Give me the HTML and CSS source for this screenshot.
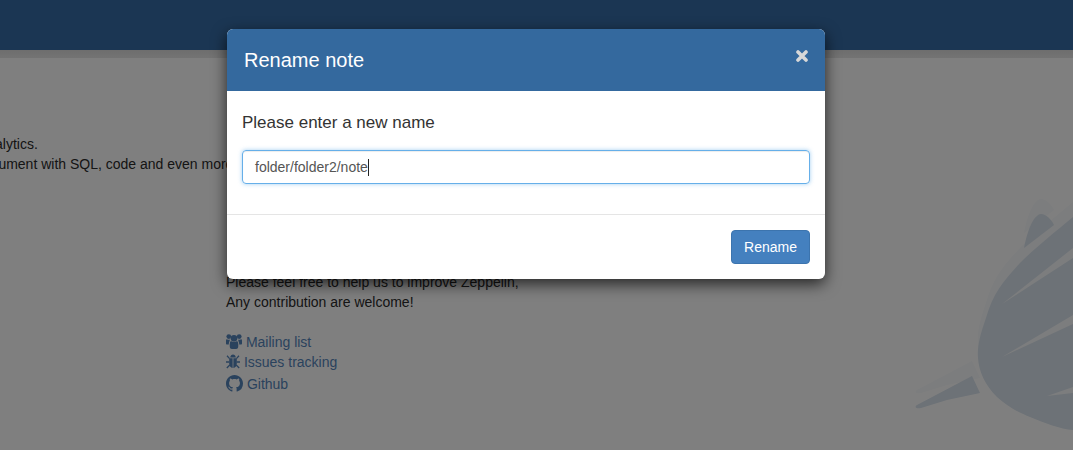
FILE: index.html
```html
<!DOCTYPE html>
<html lang="en">
<head>
    <meta charset="UTF-8">
    <title>Zeppelin - Rename note</title>
    <link rel="stylesheet" href="styles.css">
</head>
<body>
    <header class="navbar"></header>
    <div class="navbar-edge"></div>

    <svg class="watermark" width="1073" height="450" viewBox="0 0 1073 450" aria-hidden="true">
        <defs>
            <g id="bird">
                <path d="M1024 248C1027 232 1033 215 1041 214C1046 214 1051 219 1054 225Z"/>
                <path fill-rule="evenodd" d="M1073 217C1050 236 1033 250 1020 263C1004 280 993 293 986 318C980 335 977 347 978 358C979 372 985 385 997 397C1007 406 1017 412 1030 417C1045 423 1060 429 1073 430ZM1002 304L1073 248V258ZM1002 357L1073 315V324ZM1047 396L1073 387V393Z"/>
                <path d="M972 376L980 393L947 400L921 408C916 409 914 407 917 405Z"/>
            </g>
        </defs>
        <use href="#bird" class="bird-halo" y="-15"/>
        <use href="#bird" class="bird-main"/>
    </svg>

    <main class="home">
        <section class="intro">
            <p>Zeppelin is web-based notebook that enables interactive data analytics.</p>
            <p>You can make beautiful data-driven, interactive, collaborative document with SQL, code and even more!</p>
        </section>

        <section class="help">
            <p>Please feel free to help us to improve Zeppelin,</p>
            <p>Any contribution are welcome!</p>
            <ul class="links">
                <li>
                    <a href="#">
                        <svg class="icon-users" width="16" height="15" viewBox="0 0 16 15" fill="currentColor">
                            <circle cx="8" cy="4.2" r="3.3"/>
                            <circle cx="2.8" cy="2.6" r="2.4"/>
                            <circle cx="13.2" cy="2.6" r="2.4"/>
                            <path d="M4 8.5C4.1 7.6 5 7 5.8 7.4C7.2 8 8.8 8 10.2 7.4C11 7 11.9 7.6 12 8.5C12.4 10 12.4 11.5 12.2 13C12.1 14.2 11.2 15 10.2 15H5.8C4.8 15 3.9 14.2 3.8 13C3.6 11.5 3.6 10 4 8.5Z"/>
                            <path d="M0 6.6C0 5.6 .7 5.1 1.3 5.4C2 5.8 3 5.9 3.9 5.6C3.9 6.2 3.7 6.7 3.4 7.4C2.9 8.4 2.8 9.4 2.8 10.6H1C.4 10.6 0 10.1 0 9.4Z"/>
                            <path d="M16 6.6C16 5.6 15.3 5.1 14.7 5.4C14 5.8 13 5.9 12.1 5.6C12.1 6.2 12.3 6.7 12.6 7.4C13.1 8.4 13.2 9.4 13.2 10.6H15C15.6 10.6 16 10.1 16 9.4Z"/>
                        </svg>
                        Mailing list
                    </a>
                </li>
                <li>
                    <a href="#">
                        <svg class="icon-bug" width="14" height="15" viewBox="0 0 14 15" fill="currentColor">
                            <path d="M4.2 3.4C4.4 1.6 5.6 .5 7 .5C8.4 .5 9.6 1.6 9.8 3.4Z"/>
                            <path d="M3.4 4.2H6.6V14C4.6 13.8 3.2 12 3.2 9.5V5Z"/>
                            <path d="M7.4 4.2H10.6L10.8 5V9.5C10.8 12 9.4 13.8 7.4 14Z"/>
                            <path d="M1 1.8L3.6 4.6M13 1.8L10.4 4.6M0 8H3.4M14 8H10.6M.8 14L3.8 11M13.2 14L10.2 11" stroke="currentColor" stroke-width="1.3" fill="none"/>
                        </svg>
                        Issues tracking
                    </a>
                </li>
                <li class="links-github">
                    <a href="#">
                        <svg class="icon-github" width="17" height="17" viewBox="0 0 16 16" fill="currentColor">
                            <path d="M8 0C3.58 0 0 3.58 0 8c0 3.54 2.29 6.53 5.47 7.59.4.07.55-.17.55-.38 0-.19-.01-.82-.01-1.49-2.01.37-2.53-.49-2.69-.94-.09-.23-.48-.94-.82-1.13-.28-.15-.68-.52-.01-.53.63-.01 1.08.58 1.23.82.72 1.21 1.87.87 2.33.66.07-.52.28-.87.51-1.07-1.78-.2-3.64-.89-3.64-3.95 0-.87.31-1.59.82-2.15-.08-.2-.36-1.02.08-2.12 0 0 .67-.21 2.2.82.64-.18 1.32-.27 2-.27.68 0 1.36.09 2 .27 1.53-1.04 2.2-.82 2.2-.82.44 1.1.16 1.92.08 2.12.51.56.82 1.27.82 2.15 0 3.07-1.87 3.75-3.65 3.95.29.25.54.73.54 1.48 0 1.07-.01 1.93-.01 2.2 0 .21.15.46.55.38A8.013 8.013 0 0016 8c0-4.42-3.58-8-8-8z"/>
                        </svg>
                        Github
                    </a>
                </li>
            </ul>
        </section>
    </main>

    <div class="backdrop"></div>

    <div class="modal">
        <div class="modal-header">
            <h4>Rename note</h4>
            <button class="close" type="button" aria-label="Close">
                <svg width="12" height="12" viewBox="0 0 12 12">
                    <path d="M2 2L10 10M10 2L2 10" stroke="currentColor" stroke-width="3.6" stroke-linecap="round"/>
                </svg>
            </button>
        </div>
        <div class="modal-body">
            <h5>Please enter a new name</h5>
            <div class="name-input">folder/folder2/note<span class="caret"></span></div>
        </div>
        <div class="modal-footer">
            <button class="btn-rename" type="button">Rename</button>
        </div>
    </div>
</body>
</html>
```

FILE: styles.css
```css
* {
    margin: 0;
    padding: 0;
    box-sizing: border-box;
}

html,
body {
    height: 450px;
    overflow: hidden;
}

body {
    position: relative;
    background: #fff;
    color: #2a2a2a;
    font-family: 'Liberation Sans', Arial, sans-serif;
    font-size: 14px;
    line-height: 20px;
}

/* Top bar */
.navbar {
    height: 50px;
    background: #366ca6;
}

.navbar-edge {
    height: 8px;
    background: linear-gradient(#dcdcdc, #e8e8e8);
}

/* Home page behind the dialog */
.watermark {
    position: absolute;
    top: 0;
    left: 0;
}

.bird-main {
    fill: #dae4ee;
}

.bird-halo {
    fill: #f8fafc;
}

.home {
    position: relative;
    padding-top: 76px;
}

.intro {
    margin-left: -405px;
    white-space: nowrap;
}

.help {
    margin-top: 98px;
    margin-left: 226px;
}

.links {
    list-style: none;
    margin-top: 20px;
}

.links a {
    color: #5585bb;
    text-decoration: none;
}

.links svg {
    vertical-align: -2px;
}

.links-github {
    margin-top: 2px;
}

.links-github svg {
    vertical-align: -3px;
}

/* Dialog */
.backdrop {
    position: absolute;
    top: 0;
    left: 0;
    width: 100%;
    height: 100%;
    background: rgba(0, 0, 0, 0.5);
}

.modal {
    position: absolute;
    top: 29px;
    left: 227px;
    width: 598px;
    height: 250px;
    background: #fff;
    border-radius: 6px;
    box-shadow: 0 5px 15px rgba(0, 0, 0, 0.7);
    color: #333;
}

.modal-header {
    display: flex;
    justify-content: space-between;
    height: 62px;
    padding: 0 17px;
    border-radius: 6px 6px 0 0;
    background: #34699e;
    color: #fff;
}

.modal-header h4 {
    font-size: 20px;
    font-weight: 400;
    line-height: 62px;
}

.close {
    height: 12px;
    margin-top: 21px;
    border: 0;
    background: none;
    color: #d8d8d8;
}

.close svg {
    display: block;
}

.modal-body {
    padding: 21px 15px 30px;
    border-bottom: 1px solid #e5e5e5;
}

.modal-body h5 {
    font-size: 17px;
    font-weight: 400;
    line-height: 21px;
}

.name-input {
    height: 34px;
    margin-top: 17px;
    padding: 6px 12px;
    border: 1px solid #66afe9;
    border-radius: 4px;
    box-shadow: inset 0 1px 1px rgba(0, 0, 0, 0.075), 0 0 4px rgba(102, 175, 233, 0.6);
    color: #555;
}

.caret {
    display: inline-block;
    width: 1px;
    height: 17px;
    background: #222;
    vertical-align: -4px;
}

.modal-footer {
    display: flex;
    justify-content: flex-end;
    padding: 15px;
}

.btn-rename {
    width: 79px;
    height: 34px;
    border: 1px solid #3c74ae;
    border-radius: 4px;
    background: #4480bf;
    color: #fff;
    font-family: inherit;
    font-size: 14px;
}
```
